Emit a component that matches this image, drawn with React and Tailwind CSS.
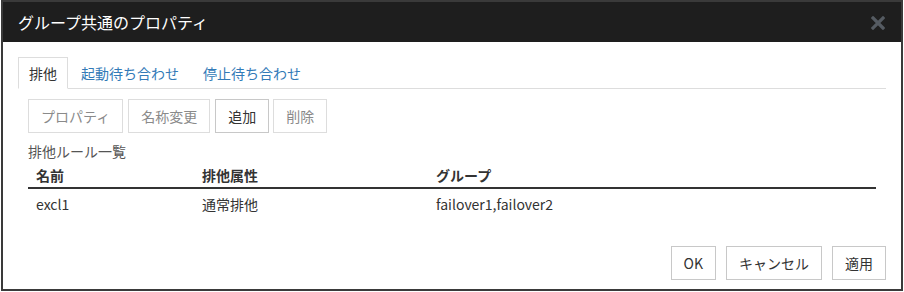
import React from 'react';

const font = { fontFamily: '"Noto Sans CJK JP", "Noto Sans", sans-serif' };

const tabs = ['排他', '起動待ち合わせ', '停止待ち合わせ'];

const Btn = ({ children, disabled, className = '' }) => (
    <button
        className={`h-[34px] px-3 border bg-white text-[14px] leading-5 ${disabled ? 'border-[#dddddd] text-[#8a8a8a]' : 'border-[#c8c8c8] text-[#333333]'} ${className}`}
    >
        {children}
    </button>
);

const App = () => {
    return (
        <div className="w-[904px] h-[292px] bg-white" style={font}>
            <div className="ml-[1px] w-[902px] h-[291px] border-2 border-[#3a3a3a] flex flex-col">
                {/* Header */}
                <div className="h-[40px] bg-[#1e1e1e] flex items-center justify-between pl-[15px] pr-[16px]">
                    <span className="text-white text-[16px]">グループ共通のプロパティ</span>
                    <svg width="14" height="14" viewBox="0 0 14 14" className="mt-[1px]">
                        <path d="M2 2 L12 12 M12 2 L2 12" stroke="#555b62" strokeWidth="3.2" strokeLinecap="square" />
                    </svg>
                </div>

                {/* Body */}
                <div className="flex-1 flex flex-col px-[15px] pt-[15px] pb-[9px]">
                    {/* Tabs */}
                    <div className="flex border-b border-[#dddddd]">
                        {tabs.map((tab, i) => (
                            <div
                                key={tab}
                                className={`mr-[2px] -mb-px px-[10px] py-[5px] text-[14px] leading-5 border ${i === 0 ? 'border-[#dddddd] border-b-white bg-white text-[#333333]' : 'border-transparent text-[#337ab7]'}`}
                            >
                                {tab}
                            </div>
                        ))}
                    </div>

                    <div className="pl-[10px] pt-[10px]">
                        {/* Toolbar */}
                        <div className="flex gap-[5px]">
                            <Btn disabled>プロパティ</Btn>
                            <Btn disabled>名称変更</Btn>
                            <Btn>追加</Btn>
                            <Btn disabled className="-ml-px">削除</Btn>
                        </div>

                        <div className="mt-[8px] text-[14px] leading-5 text-[#555555]">排他ルール一覧</div>

                        {/* Table */}
                        <table className="w-[848px] text-[14px] leading-5 text-[#333333] border-collapse">
                            <thead>
                                <tr className="border-b-2 border-[#333333]">
                                    <th className="w-[166px] text-left font-bold px-2 pt-[4px] pb-[2px]">名前</th>
                                    <th className="w-[234px] text-left font-bold px-2 pt-[4px] pb-[2px]">排他属性</th>
                                    <th className="text-left font-bold px-2 pt-[4px] pb-[2px]">グループ</th>
                                </tr>
                            </thead>
                            <tbody>
                                <tr>
                                    <td className="px-2 pt-[5px] pb-[5px]">excl1</td>
                                    <td className="px-2 pt-[5px] pb-[5px]">通常排他</td>
                                    <td className="px-2 pt-[5px] pb-[5px]">failover1,failover2</td>
                                </tr>
                            </tbody>
                        </table>
                    </div>

                    {/* Footer */}
                    <div className="mt-auto flex justify-end gap-[10px]">
                        <Btn>OK</Btn>
                        <Btn>キャンセル</Btn>
                        <Btn>適用</Btn>
                    </div>
                </div>
            </div>
        </div>
    );
};

export default App;
